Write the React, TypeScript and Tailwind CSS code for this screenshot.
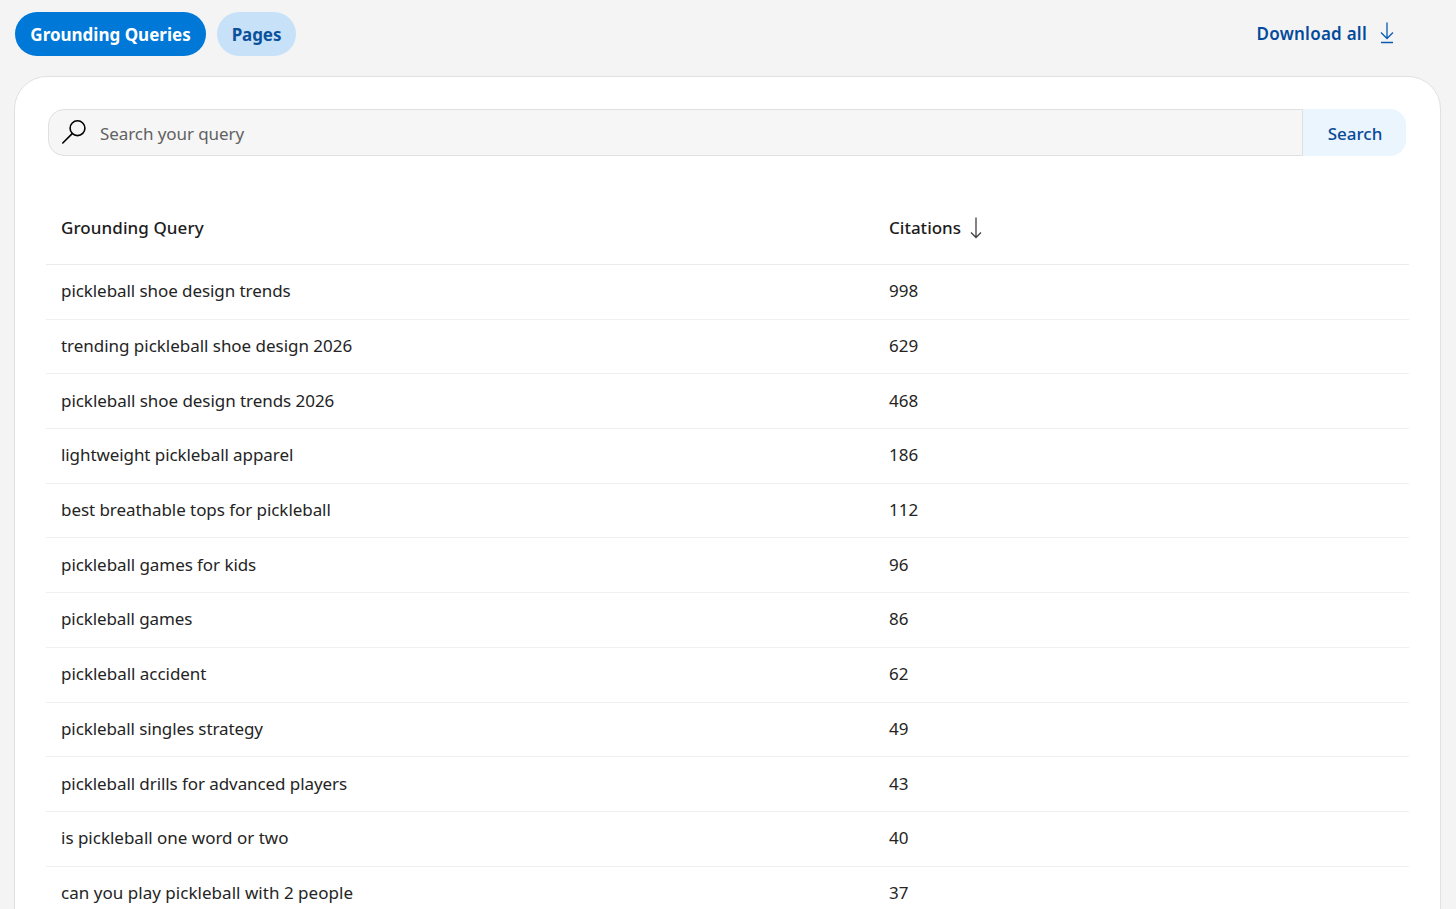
const rows: { query: string; citations: number; spacing: string }[] = [
  { query: "pickleball shoe design trends", citations: 998, spacing: "tracking-[-0.07px]" },
  { query: "trending pickleball shoe design 2026", citations: 629, spacing: "tracking-[-0.03px]" },
  { query: "pickleball shoe design trends 2026", citations: 468, spacing: "tracking-[-0.05px]" },
  { query: "lightweight pickleball apparel", citations: 186, spacing: "tracking-[-0.08px]" },
  { query: "best breathable tops for pickleball", citations: 112, spacing: "tracking-[-0.06px]" },
  { query: "pickleball games for kids", citations: 96, spacing: "tracking-[-0.07px]" },
  { query: "pickleball games", citations: 86, spacing: "tracking-[-0.1px]" },
  { query: "pickleball accident", citations: 62, spacing: "tracking-[-0.04px]" },
  { query: "pickleball singles strategy", citations: 49, spacing: "tracking-[-0.1px]" },
  { query: "pickleball drills for advanced players", citations: 43, spacing: "tracking-[-0.08px]" },
  { query: "is pickleball one word or two", citations: 40, spacing: "tracking-[-0.01px]" },
  { query: "can you play pickleball with 2 people", citations: 37, spacing: "tracking-[0.03px]" },
];

function SearchIcon() {
  return (
    <svg className="h-6 w-6 shrink-0" viewBox="0 0 24 24" fill="none" stroke="#000" strokeWidth="1.6">
      <circle cx="15.5" cy="8.2" r="7.4" />
      <path d="M10.2 13.6 0.8 23" strokeLinecap="round" />
    </svg>
  );
}

function DownloadIcon() {
  return (
    <svg className="h-[22px] w-[14px]" viewBox="0 0 14 22" fill="none" stroke="#0a5bb0" strokeWidth="1.3">
      <path d="M7 0.5V16M1 10.5l6 6 6-6M1 20.5h12" />
    </svg>
  );
}

function SortIcon() {
  return (
    <svg className="h-[22px] w-3" viewBox="0 0 12 22" fill="none" stroke="#424242" strokeWidth="1.3">
      <path d="M6 0.5V20M1 15.5l5 5 5-5" />
    </svg>
  );
}

export default function App() {
  return (
    <div className="flex h-[909px] w-[1456px] flex-col overflow-hidden bg-[#f4f4f4] font-['Noto_Sans',sans-serif] text-[17px] text-[#242424]">
      <header className="flex h-[76px] shrink-0 items-start justify-between pt-3 pr-[62px] pl-[15px]">
        <nav className="flex gap-[11px]">
          <button className="flex h-11 w-[191px] items-center justify-center rounded-full bg-[#0078d7] pt-[2px] font-bold whitespace-nowrap text-white">
            Grounding Queries
          </button>
          <button className="flex h-11 w-[79px] items-center justify-center rounded-full bg-[#c7e2f8] pt-[2px] font-bold tracking-[-0.1px] text-[#0b519b]">
            Pages
          </button>
        </nav>
        <button className="mt-2 flex items-center gap-[13px] font-semibold leading-6 text-[#044a9b]">
          <span className="pt-[2px] tracking-[0.25px]">Download all</span>
          <DownloadIcon />
        </button>
      </header>

      <main className="mx-[14px] mr-[15px] h-[900px] shrink-0 rounded-t-[33px] border border-[#e1e1e1] bg-white px-[31px] pt-8">
        <div className="mr-[2px] ml-[2px] flex h-[47px] w-[1358px]">
          <div className="flex w-[1255px] items-center rounded-l-2xl border border-[#e0e0e0] bg-[#f6f6f6] pb-px pl-[12.5px]">
            <SearchIcon />
            <input
              className="ml-[14.5px] h-full flex-1 bg-transparent pt-[2px] tracking-[-0.08px] text-[#616161] outline-none placeholder:text-[#616161]"
              placeholder="Search your query"
            />
          </div>
          <button className="flex-1 rounded-r-2xl bg-[#eaf5fe] pt-[2px] pl-px font-medium text-[#084a98]">Search</button>
        </div>

        <div className="mt-[35px] w-[1363px]">
          <div className="flex h-[74px] items-center border-b border-[#ebebeb] pl-[15px] font-medium text-[#1c1c1c]">
            <span className="w-[828px] tracking-[0.08px]">Grounding Query</span>
            <span className="flex items-center gap-[9px]">
              Citations
              <SortIcon />
            </span>
          </div>
          {rows.map((row) => (
            <div key={row.query} className="flex h-[54.7px] items-center border-b border-[#f0f0f0] pb-[1.5px] pl-[15px]">
              <span className={`w-[828px] whitespace-nowrap ${row.spacing}`}>{row.query}</span>
              <span>{row.citations}</span>
            </div>
          ))}
        </div>
      </main>
    </div>
  );
}
